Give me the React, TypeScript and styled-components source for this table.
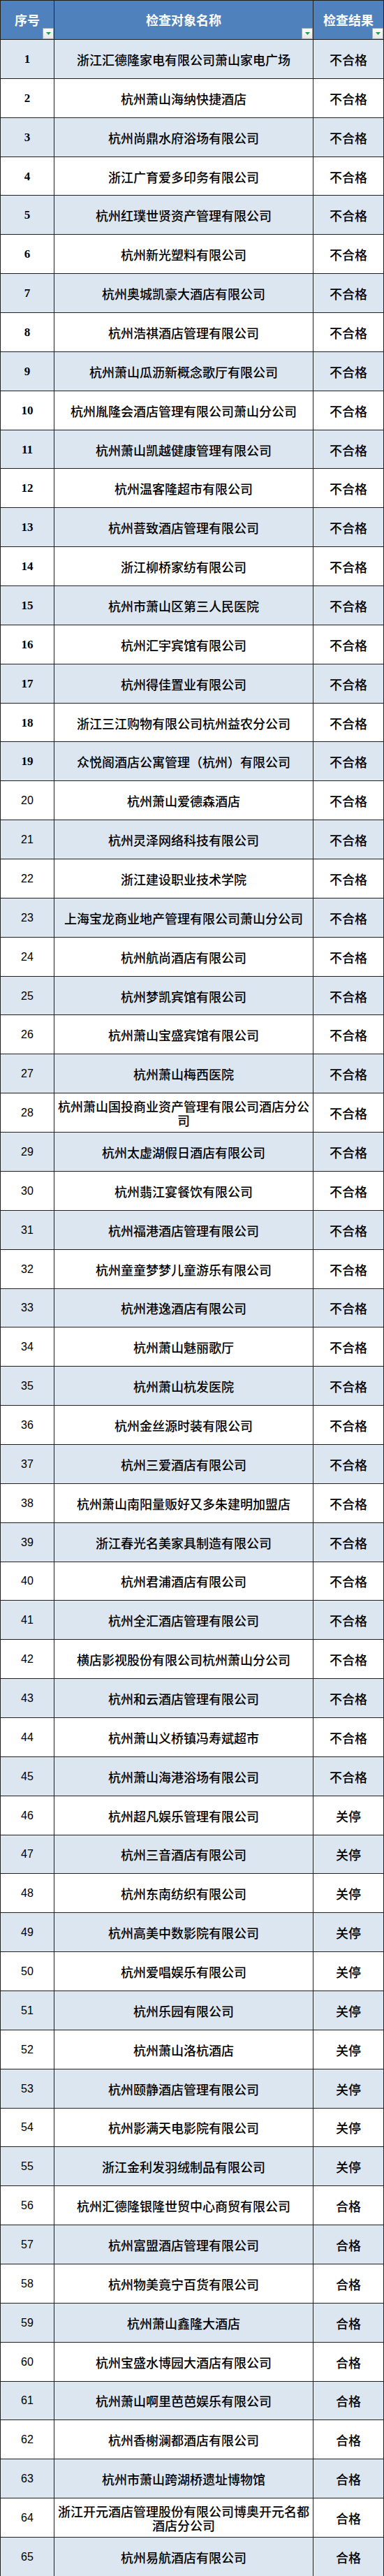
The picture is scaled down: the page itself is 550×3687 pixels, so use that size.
import React, { FC } from "react";
import styled, { createGlobalStyle, css } from "styled-components";

type Result = "不合格" | "关停" | "合格";

interface Entry {
  name: string;
  result: Result;
}

const names: string[] = [
  "浙江汇德隆家电有限公司萧山家电广场",
  "杭州萧山海纳快捷酒店",
  "杭州尚鼎水府浴场有限公司",
  "浙江广育爱多印务有限公司",
  "杭州红璞世贤资产管理有限公司",
  "杭州新光塑料有限公司",
  "杭州奥城凯豪大酒店有限公司",
  "杭州浩祺酒店管理有限公司",
  "杭州萧山瓜沥新概念歌厅有限公司",
  "杭州胤隆会酒店管理有限公司萧山分公司",
  "杭州萧山凯越健康管理有限公司",
  "杭州温客隆超市有限公司",
  "杭州菩致酒店管理有限公司",
  "浙江柳桥家纺有限公司",
  "杭州市萧山区第三人民医院",
  "杭州汇宇宾馆有限公司",
  "杭州得佳置业有限公司",
  "浙江三江购物有限公司杭州益农分公司",
  "众悦阁酒店公寓管理（杭州）有限公司",
  "杭州萧山爱德森酒店",
  "杭州灵泽网络科技有限公司",
  "浙江建设职业技术学院",
  "上海宝龙商业地产管理有限公司萧山分公司",
  "杭州航尚酒店有限公司",
  "杭州梦凯宾馆有限公司",
  "杭州萧山宝盛宾馆有限公司",
  "杭州萧山梅西医院",
  "杭州萧山国投商业资产管理有限公司酒店分公司",
  "杭州太虚湖假日酒店有限公司",
  "杭州翡江宴餐饮有限公司",
  "杭州福港酒店管理有限公司",
  "杭州童童梦梦儿童游乐有限公司",
  "杭州港逸酒店有限公司",
  "杭州萧山魅丽歌厅",
  "杭州萧山杭发医院",
  "杭州金丝源时装有限公司",
  "杭州三爱酒店有限公司",
  "杭州萧山南阳量贩好又多朱建明加盟店",
  "浙江春光名美家具制造有限公司",
  "杭州君浦酒店有限公司",
  "杭州全汇酒店管理有限公司",
  "横店影视股份有限公司杭州萧山分公司",
  "杭州和云酒店管理有限公司",
  "杭州萧山义桥镇冯寿斌超市",
  "杭州萧山海港浴场有限公司",
  "杭州超凡娱乐管理有限公司",
  "杭州三音酒店有限公司",
  "杭州东南纺织有限公司",
  "杭州高美中数影院有限公司",
  "杭州爱唱娱乐有限公司",
  "杭州乐园有限公司",
  "杭州萧山洛杭酒店",
  "杭州颐静酒店管理有限公司",
  "杭州影满天电影院有限公司",
  "浙江金利发羽绒制品有限公司",
  "杭州汇德隆银隆世贸中心商贸有限公司",
  "杭州富盟酒店管理有限公司",
  "杭州物美竟宁百货有限公司",
  "杭州萧山鑫隆大酒店",
  "杭州宝盛水博园大酒店有限公司",
  "杭州萧山啊里芭芭娱乐有限公司",
  "杭州香榭澜都酒店有限公司",
  "杭州市萧山跨湖桥遗址博物馆",
  "浙江开元酒店管理股份有限公司博奥开元名都酒店分公司",
  "杭州易航酒店有限公司",
];

const resultFor = (index: number): Result => {
  if (index < 45) return "不合格";
  if (index < 55) return "关停";
  return "合格";
};

const entries: Entry[] = names.map((name, i) => ({ name, result: resultFor(i) }));

const GlobalStyle = createGlobalStyle`
  html, body {
    margin: 0;
    padding: 0;
    background: #ffffff;
  }
  * {
    box-sizing: border-box;
  }
`;

const Sheet = styled.div`
  width: 550px;
  display: grid;
  grid-template-columns: 77px 371px 1fr;
  grid-template-rows: 56px;
  grid-auto-rows: 55.862px;
  border-top: 1px solid #1f1f1f;
  border-left: 1px solid #1f1f1f;
  font-family: "Noto Sans CJK SC", "Liberation Sans", sans-serif;
  color: #000000;
`;

interface CellProps {
  striped?: boolean;
}

const Cell = styled.div<CellProps>`
  display: flex;
  align-items: center;
  justify-content: center;
  text-align: center;
  padding: 1px 4px 0;
  border-right: 1px solid #1f1f1f;
  border-bottom: 1px solid #1f1f1f;
  background-color: ${(props) => (props.striped ? "#dce6f1" : "#ffffff")};
  font-size: 18px;
  line-height: 20px;
  font-weight: 500;
`;

const HeadCell = styled.div`
  position: relative;
  display: flex;
  align-items: center;
  justify-content: center;
  padding-bottom: 2px;
  border-right: 1px solid #1f1f1f;
  border-bottom: 1px solid #1f1f1f;
  background-color: #4f81bd;
  color: #ffffff;
  font-size: 18px;
  font-weight: 700;
  letter-spacing: 0;
`;

const FilterButton = styled.span`
  position: absolute;
  right: 0;
  bottom: 0;
  width: 16px;
  height: 16px;
  display: flex;
  align-items: center;
  justify-content: center;
  background: linear-gradient(#ffffff, #e6e6e6);
  border: 1px solid #9aa6b4;
`;

interface NumberProps {
  serif?: boolean;
}

const Number = styled.span<NumberProps>`
  ${(props) =>
    props.serif
      ? css`
          font-family: "Liberation Serif", "DejaVu Serif", serif;
          font-size: 17px;
          font-weight: 700;
        `
      : css`
          font-family: "Liberation Sans", Arial, sans-serif;
          font-size: 16px;
          font-weight: 400;
        `}
`;

const Filter: FC = () => (
  <FilterButton>
    <svg width="7" height="4" viewBox="0 0 7 4">
      <path d="M0 0 L7 0 L3.5 4 Z" fill="#1aa34a" />
    </svg>
  </FilterButton>
);

const App: FC = () => (
  <>
    <GlobalStyle />
    <Sheet>
      <HeadCell>
        序号
        <Filter />
      </HeadCell>
      <HeadCell>
        检查对象名称
        <Filter />
      </HeadCell>
      <HeadCell>
        检查结果
        <Filter />
      </HeadCell>
      {entries.map((entry, index) => {
        const striped = index % 2 === 0;
        return (
          <React.Fragment key={index}>
            <Cell striped={striped}>
              <Number serif={index < 19}>{index + 1}</Number>
            </Cell>
            <Cell striped={striped}>{entry.name}</Cell>
            <Cell striped={striped}>{entry.result}</Cell>
          </React.Fragment>
        );
      })}
    </Sheet>
  </>
);

export default App;
